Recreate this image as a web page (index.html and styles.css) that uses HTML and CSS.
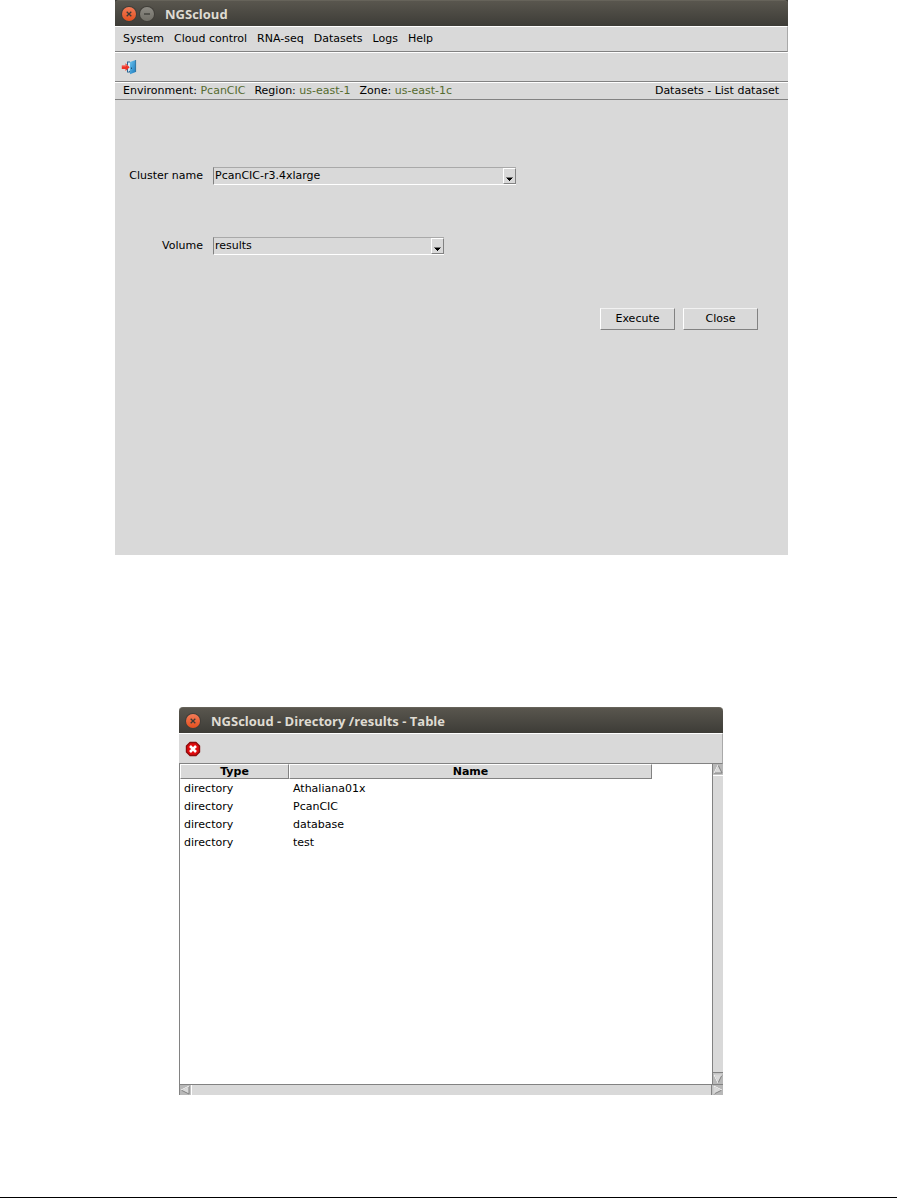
FILE: index.html
```html
<!DOCTYPE html>
<html lang="en">
<head>
    <meta charset="UTF-8">
    <meta name="viewport" content="width=device-width, initial-scale=1.0">
    <title>NGScloud</title>
    <link rel="stylesheet" href="styles.css">
</head>
<body>
    <main class="page">
        <section class="window main-window">
            <header class="titlebar">
                <button class="win-button close" aria-label="Close window">
                    <svg viewBox="0 0 14 14"><path d="M4.7 4.7l4.6 4.6M9.3 4.7L4.7 9.3"/></svg>
                </button>
                <button class="win-button minimize" aria-label="Minimize window">
                    <svg viewBox="0 0 14 14"><path d="M4 7h6"/></svg>
                </button>
                <h1>NGScloud</h1>
            </header>

            <nav class="menubar">
                <button>System</button>
                <button>Cloud control</button>
                <button>RNA-seq</button>
                <button>Datasets</button>
                <button>Logs</button>
                <button>Help</button>
            </nav>

            <div class="toolbar">
                <button class="tool" aria-label="Exit">
                    <svg viewBox="0 0 16 16">
                        <defs>
                            <linearGradient id="door" x1="0" y1="0" x2="1" y2="1">
                                <stop offset="0" stop-color="#6cc4ee"/>
                                <stop offset="1" stop-color="#1a78bd"/>
                            </linearGradient>
                        </defs>
                        <path d="M6 2.500h3v11H6z" fill="#2a6593"/>
                        <path d="M7 3.500h2v8L7 13z" fill="#d3ecf8"/>
                        <path d="M9 3L14.700 1V13L9 15.300z" fill="url(#door)"/>
                        <path d="M14.600 1v12" stroke="#1b628f" stroke-width=".7"/>
                        <path d="M10.500 8.500v1.500" stroke="#123e60" stroke-width=".8"/>
                        <path d="M.8 6.500h3.700V4.300L8.700 8.200 4.500 12V10H.8z" fill="#ee3226"/>
                        <path d="M1 7h4v-1.500L7 7.500" stroke="#f9857a" stroke-width=".7"/>
                    </svg>
                </button>
            </div>

            <div class="statusbar">
                <span>Environment: <b>PcanCIC</b></span>
                <span>Region: <b>us-east-1</b></span>
                <span>Zone: <b>us-east-1c</b></span>
                <span class="process">Datasets - List dataset</span>
            </div>

            <form class="dataset-form">
                <label for="cluster">Cluster name</label>
                <div class="combo combo-wide">
                    <select id="cluster">
                        <option>PcanCIC-r3.4xlarge</option>
                    </select>
                    <svg class="arrow" viewBox="0 0 11 14"><path d="M2 8h7v1H8v1H7v1H6v1H5v-1H4v-1H3V9H2z"/><path class="edge" d="M2 8h7v1H2z"/></svg>
                </div>

                <label for="volume">Volume</label>
                <div class="combo">
                    <select id="volume">
                        <option>results</option>
                    </select>
                    <svg class="arrow" viewBox="0 0 11 14"><path d="M2 8h7v1H8v1H7v1H6v1H5v-1H4v-1H3V9H2z"/><path class="edge" d="M2 8h7v1H2z"/></svg>
                </div>

                <div class="actions">
                    <button type="button">Execute</button>
                    <button type="button">Close</button>
                </div>
            </form>
        </section>

        <section class="window table-window">
            <header class="titlebar">
                <button class="win-button close" aria-label="Close window">
                    <svg viewBox="0 0 14 14"><path d="M4.7 4.7l4.6 4.6M9.3 4.7L4.7 9.3"/></svg>
                </button>
                <h2>NGScloud - Directory /results - Table</h2>
            </header>

            <div class="toolbar">
                <button class="tool" aria-label="Close table">
                    <svg viewBox="0 0 16 16">
                        <path d="M5 1.500h6l3.500 3.500v6L11 14.500H5L1.500 11V5z" fill="#e00b0e" stroke="#8c0b0b" stroke-width="1.400" stroke-linejoin="round"/>
                        <path d="M5 5l6 6M11 5l-6 6" stroke="#fff" stroke-width="2.600"/>
                    </svg>
                </button>
            </div>

            <div class="table-area">
                <div class="table-view">
                    <table>
                        <thead>
                            <tr><th class="col-type">Type</th><th class="col-name">Name</th></tr>
                        </thead>
                        <tbody>
                            <tr><td>directory</td><td>Athaliana01x</td></tr>
                            <tr><td>directory</td><td>PcanCIC</td></tr>
                            <tr><td>directory</td><td>database</td></tr>
                            <tr><td>directory</td><td>test</td></tr>
                        </tbody>
                    </table>
                </div>
                <div class="scrollbar vertical">
                    <svg viewBox="0 0 10 10"><path d="M5 1L9 9H1z"/><path class="lit" d="M1 9L5 1"/></svg>
                    <div class="thumb"></div>
                    <svg viewBox="0 0 10 10"><path d="M1 1h8L5 9z"/><path class="lit" d="M5 9L1 1h8"/></svg>
                </div>
                <div class="scrollbar horizontal">
                    <svg viewBox="0 0 10 10"><path d="M9 1v8L1 5z"/><path class="lit" d="M1 5l8-4"/></svg>
                    <div class="thumb"></div>
                    <svg viewBox="0 0 10 10"><path d="M1 1l8 4-8 4z"/><path class="lit" d="M1 9V1l8 4"/></svg>
                </div>
            </div>
        </section>
    </main>
</body>
</html>
```
FILE: styles.css
```css
:root {
    --face: #d9d9d9;
    --shadow: #828282;
    --soft-shadow: #a9a9a9;
    --value-color: #556b2f;
}

* {
    box-sizing: border-box;
    margin: 0;
    padding: 0;
}

body {
    font-family: "DejaVu Sans", sans-serif;
    font-size: 11px;
    line-height: 14px;
    color: #000;
    background-color: #fff;
}

button,
select {
    font: inherit;
    color: inherit;
    background: none;
    border: none;
}

.page {
    min-height: 100vh;
    padding: 0 109px 0 115px;
    border-bottom: 1px solid #000;
}

.window {
    background-color: var(--face);
}

.table-window {
    margin: 152px 65px 102px 64px;
    background-color: transparent;
}

.main-window {
    background: linear-gradient(#3d3c37 8px, var(--face) 8px);
}

/* Title bar */
.titlebar {
    display: flex;
    align-items: center;
    gap: 4px;
    height: 26px;
    padding: 0 7px;
    background: linear-gradient(#59564e, #3d3c37);
    border-top: 1px solid #66635a;
    border-radius: 4px 4px 0 0;
    color: #dfdbd2;
}

.titlebar h1,
.titlebar h2 {
    margin-left: 7px;
    font: bold 13px/16px "Open Sans", sans-serif;
}

.win-button {
    width: 14px;
    height: 14px;
    border-radius: 50%;
    box-shadow: 0 0 0 1px #403e39;
}

.win-button svg {
    display: block;
    fill: none;
    stroke: #3c3b37;
    stroke-width: 1.3;
}

.win-button.close {
    background: linear-gradient(#f37b57, #e4501f);
}

.win-button.minimize {
    background: linear-gradient(#8c8a83, #716f67);
}

/* Menu, tool and status bars */
.menubar,
.toolbar,
.statusbar {
    display: flex;
    align-items: center;
    background-color: var(--face);
    border-top: 1px solid #fff;
    border-bottom: 1px solid var(--shadow);
}

.menubar {
    gap: 10px;
    height: 26px;
    padding: 0 8px;
    border-right: 1px solid var(--soft-shadow);
}

.toolbar {
    height: 30px;
    padding: 0 6px;
}

.tool,
.tool svg {
    display: block;
    width: 16px;
    height: 16px;
}

.tool svg {
    fill: none;
}

.statusbar {
    gap: 9px;
    height: 18px;
    padding: 0 9px 0 8px;
}

.statusbar b {
    font-weight: normal;
    color: var(--value-color);
}

.statusbar .process {
    margin-left: auto;
}

/* Dataset form */
.dataset-form {
    display: grid;
    grid-template-columns: 88px 1fr;
    column-gap: 10px;
    row-gap: 52px;
    align-items: center;
    align-content: start;
    min-height: 455px;
    padding: 67px 30px 0 0;
}

.dataset-form label {
    text-align: right;
}

.combo {
    display: flex;
    width: 231px;
    height: 18px;
    border: 1px solid var(--shadow);
    border-top-color: var(--soft-shadow);
    border-right: none;
    border-bottom-color: #fff;
}

.combo-wide {
    width: 303px;
}

.combo select {
    flex: 1;
    min-width: 0;
    padding-left: 1px;
    appearance: none;
}

.arrow {
    width: 13px;
    height: 16px;
    border: 1px solid var(--shadow);
    border-top-color: #fff;
    border-left-color: #fff;
    pointer-events: none;
}

.arrow .edge {
    fill: #777;
}

.actions {
    grid-column: 1 / -1;
    display: flex;
    justify-content: flex-end;
    gap: 8px;
    padding-top: 1px;
}

.actions button {
    width: 75px;
    height: 22px;
    border: 1px solid var(--shadow);
    border-top-color: #f2f2f2;
    border-left-color: #fff;
}

/* Directory table */
.table-window .toolbar {
    height: 31px;
    border-right: 1px solid var(--soft-shadow);
}

.table-area {
    display: grid;
    grid-template-columns: 1fr 11px;
    grid-template-rows: 320px 11px;
}

.table-view {
    background-color: #fff;
    border-left: 1px solid var(--shadow);
    overflow: hidden;
}

table {
    width: 472px;
    table-layout: fixed;
    border-collapse: separate;
    border-spacing: 0;
}

.col-type {
    width: 109px;
}

th {
    height: 15px;
    line-height: 12px;
    background-color: var(--face);
    border: 1px solid var(--shadow);
    border-top-color: #fff;
    border-left-color: #fff;
}

td {
    height: 18px;
    padding: 2px 0 0 4px;
}

/* Scroll bars */
.scrollbar {
    display: flex;
    background-color: #c3c3c3;
}

.scrollbar svg {
    width: 10px;
    height: 10px;
    fill: var(--face);
    stroke: var(--shadow);
    background-color: #b8b8b8;
}

.scrollbar svg .lit {
    fill: none;
    stroke: #fff;
}

.vertical {
    flex-direction: column;
    gap: 1px;
    border-left: 1px solid var(--shadow);
}

.horizontal {
    grid-column: 1 / -1;
    gap: 1px;
    border-top: 1px solid var(--shadow);
    border-left: 1px solid var(--shadow);
}

.thumb {
    flex: 1;
    background-color: var(--face);
    border: 1px solid var(--shadow);
    border-top-color: #fff;
    border-left-color: #fff;
}

.vertical .thumb {
    border-width: 1px 0;
}

.horizontal .thumb {
    border-width: 0 1px;
}
```
